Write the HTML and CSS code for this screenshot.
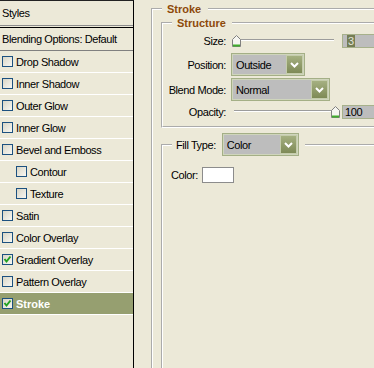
FILE: index.html
```html
<!DOCTYPE html>
<html>
	<head>
		<link rel="stylesheet" href="styles.css">
	</head>
	<body>
		<div class="dialog">
			<div class="styles_list">
				<div class="list_header">Styles</div>
				<div class="list_blending">Blending Options: Default</div>
				<div class="list_item"><span class="check"></span>Drop Shadow</div>
				<div class="list_item"><span class="check"></span>Inner Shadow</div>
				<div class="list_item"><span class="check"></span>Outer Glow</div>
				<div class="list_item"><span class="check"></span>Inner Glow</div>
				<div class="list_item"><span class="check"></span>Bevel and Emboss</div>
				<div class="list_item list_sub"><span class="check"></span>Contour</div>
				<div class="list_item list_sub"><span class="check"></span>Texture</div>
				<div class="list_item"><span class="check"></span>Satin</div>
				<div class="list_item"><span class="check"></span>Color Overlay</div>
				<div class="list_item"><span class="check"><svg width="9" height="9" viewBox="0 0 9 9"><polyline points="1.5,4 3.5,6.5 7.5,1.5" fill="none" stroke="#21a121" stroke-width="2"/></svg></span>Gradient Overlay</div>
				<div class="list_item"><span class="check"></span>Pattern Overlay</div>
				<div class="list_item list_selected"><span class="check"><svg width="9" height="9" viewBox="0 0 9 9"><polyline points="1.5,4 3.5,6.5 7.5,1.5" fill="none" stroke="#21a121" stroke-width="2"/></svg></span>Stroke</div>
			</div>
			<div class="options">
				<fieldset class="group group_stroke">
					<legend class="group_title">Stroke</legend>
					<fieldset class="group group_inner group_structure">
						<legend class="group_title group_title_sub">Structure</legend>
						<div class="row row_slim">
							<span class="label">Size:</span>
							<div class="slider">
								<span class="track"></span>
								<svg class="thumb" style="left: 1px" width="9" height="12" viewBox="0 0 9 12"><path d="M0.5 11.5V4.5L4.5 0.5L8.5 4.5V11.5Z" fill="#f6f6f1" stroke="#808080"/><rect x="1" y="9.5" width="7" height="2" fill="#40ad2c"/></svg>
							</div>
							<span class="number"><span class="number_selected">3</span></span>
						</div>
						<div class="row row_position">
							<span class="label">Position:</span>
							<span class="dropdown dropdown_position">
								<span class="dropdown_value">Outside</span>
								<span class="dropdown_button"><svg width="9" height="6" viewBox="0 0 9 6"><polyline points="1,1 4.5,4.5 8,1" fill="none" stroke="#fff" stroke-width="2"/></svg></span>
							</span>
						</div>
						<div class="row row_blend">
							<span class="label">Blend Mode:</span>
							<span class="dropdown dropdown_blend">
								<span class="dropdown_value">Normal</span>
								<span class="dropdown_button"><svg width="9" height="6" viewBox="0 0 9 6"><polyline points="1,1 4.5,4.5 8,1" fill="none" stroke="#fff" stroke-width="2"/></svg></span>
							</span>
						</div>
						<div class="row row_slim row_opacity">
							<span class="label">Opacity:</span>
							<div class="slider">
								<span class="track"></span>
								<svg class="thumb" style="left: 100px" width="9" height="12" viewBox="0 0 9 12"><path d="M0.5 11.5V4.5L4.5 0.5L8.5 4.5V11.5Z" fill="#f6f6f1" stroke="#808080"/><rect x="1" y="9.5" width="7" height="2" fill="#40ad2c"/></svg>
							</div>
							<span class="number">100</span>
						</div>
					</fieldset>
					<fieldset class="group group_inner group_fill">
						<legend class="fill_legend">
							<span>Fill Type:</span>
							<span class="dropdown dropdown_fill">
								<span class="dropdown_value">Color</span>
								<span class="dropdown_button"><svg width="9" height="6" viewBox="0 0 9 6"><polyline points="1,1 4.5,4.5 8,1" fill="none" stroke="#fff" stroke-width="2"/></svg></span>
							</span>
						</legend>
						<div class="color_row">
							<span>Color:</span>
							<span class="swatch"></span>
						</div>
					</fieldset>
				</fieldset>
			</div>
		</div>
	</body>
</html>
```

FILE: styles.css
```css
html	{
	height: 100%;
	overflow: hidden;
}
body	{
	margin: 0;
	height: 100%;
	overflow: hidden;
	background: #ece9d8;
	font-family: "Liberation Sans", Arial, sans-serif;
	font-size: 11px;
	letter-spacing: -0.4px;
	color: #000;
}
.dialog	{
	display: flex;
	width: 100%;
	height: 100%;
	overflow: hidden;
}

/* left list of styles */
.styles_list	{
	flex: none;
	width: 134px;
	height: 100%;
	box-sizing: border-box;
	border-top: 1px solid #222;
	border-right: 1px solid #000;
}
.list_header	{
	display: flex;
	align-items: center;
	height: 24px;
	padding-left: 2px;
	border-bottom: 1px solid #8c8c8c;
}
.list_blending	{
	display: flex;
	align-items: center;
	height: 22px;
	margin-top: 1px;
	padding-left: 2px;
	border-top: 1px solid #000;
	border-bottom: 1px solid #808080;
}
.list_item	{
	display: flex;
	align-items: center;
	gap: 3px;
	height: 21px;
	padding-left: 2px;
	border-bottom: 1px solid #fff;
}
.list_sub	{
	padding-left: 16px;
}
.list_selected	{
	background: #969f70;
	color: #fff;
	font-weight: bold;
	letter-spacing: 0;
}
.check	{
	display: flex;
	align-items: center;
	justify-content: center;
	flex: none;
	width: 11px;
	height: 11px;
	box-sizing: border-box;
	border: 1px solid #1c5180;
	background: linear-gradient(135deg, #d9d6c6, #f7f7f2);
}

/* right options panel */
.options	{
	flex: 1;
	min-width: 0;
	height: 100%;
	overflow: hidden;
}
.group	{
	margin: 3px 0 0 17px;
	padding: 2px 0 0 0;
	min-width: 0;
	width: 250px;
	height: 400px;
	border: 2px groove #fff;
}
.group_title	{
	margin-left: 9px;
	padding: 0 7px 0 5px;
	line-height: 12px;
	font-weight: bold;
	letter-spacing: 0;
	color: #8e4a0b;
}
.group_inner	{
	margin: 0 0 0 8px;
	width: 240px;
}
.group_structure	{
	height: auto;
	padding: 5px 0 7px 0;
}
.group_title_sub	{
	padding: 0 6px 0 5px;
}
.group_fill	{
	margin-top: 5px;
	height: 300px;
	padding: 11px 0 0 0;
}
.fill_legend	{
	display: flex;
	align-items: center;
	gap: 6px;
	margin-left: 9px;
	padding: 0 6px 0 4px;
}

.row	{
	display: flex;
	align-items: center;
	height: 23px;
	margin-top: 2px;
}
.row_slim	{
	height: 14px;
	margin-top: 0;
}
.row_position	{
	margin-top: 5px;
}
.row_opacity	{
	margin-top: 4px;
}
.label	{
	flex: none;
	width: 63px;
	margin-right: 5px;
	text-align: right;
}
.slider	{
	position: relative;
	flex: none;
	width: 108px;
	height: 14px;
	margin-right: 3px;
}
.track	{
	display: block;
	margin: 5px 5px 0 3px;
	height: 0;
	border-top: 1px solid #9c9c9c;
	border-bottom: 1px solid #fff;
}
.thumb	{
	position: absolute;
	top: 1px;
}
.number	{
	flex: none;
	display: flex;
	align-items: center;
	width: 44px;
	height: 14px;
	box-sizing: border-box;
	padding-left: 2px;
	border: 1px solid #a7b18b;
	background: #bdbdbd;
}
.number_selected	{
	margin-left: 2px;
	padding: 0 1px;
	background: #757d55;
	color: #e4e6da;
	line-height: 12px;
}

.dropdown	{
	flex: none;
	display: flex;
	height: 23px;
	box-sizing: border-box;
	padding: 1px;
	border: 1px solid #a4af86;
	background: #bdbdbd;
	box-shadow: inset 0 0 0 1px #cfd5bc;
	font-weight: normal;
	letter-spacing: -0.4px;
	color: #000;
}
.dropdown_position	{
	width: 74px;
}
.dropdown_blend	{
	width: 99px;
}
.dropdown_fill	{
	width: 77px;
}
.dropdown_value	{
	display: flex;
	align-items: center;
	flex: 1;
	padding-left: 3px;
}
.dropdown_button	{
	display: flex;
	align-items: center;
	justify-content: center;
	width: 17px;
	box-sizing: border-box;
	border: 1px solid #c4ccab;
	background: linear-gradient(#a5b081, #7e8a56);
}

.color_row	{
	display: flex;
	align-items: center;
	gap: 4px;
	padding-left: 8px;
}
.swatch	{
	width: 32px;
	height: 16px;
	box-sizing: border-box;
	border: 1px solid #8c8c8c;
	background: #fff;
}
```
